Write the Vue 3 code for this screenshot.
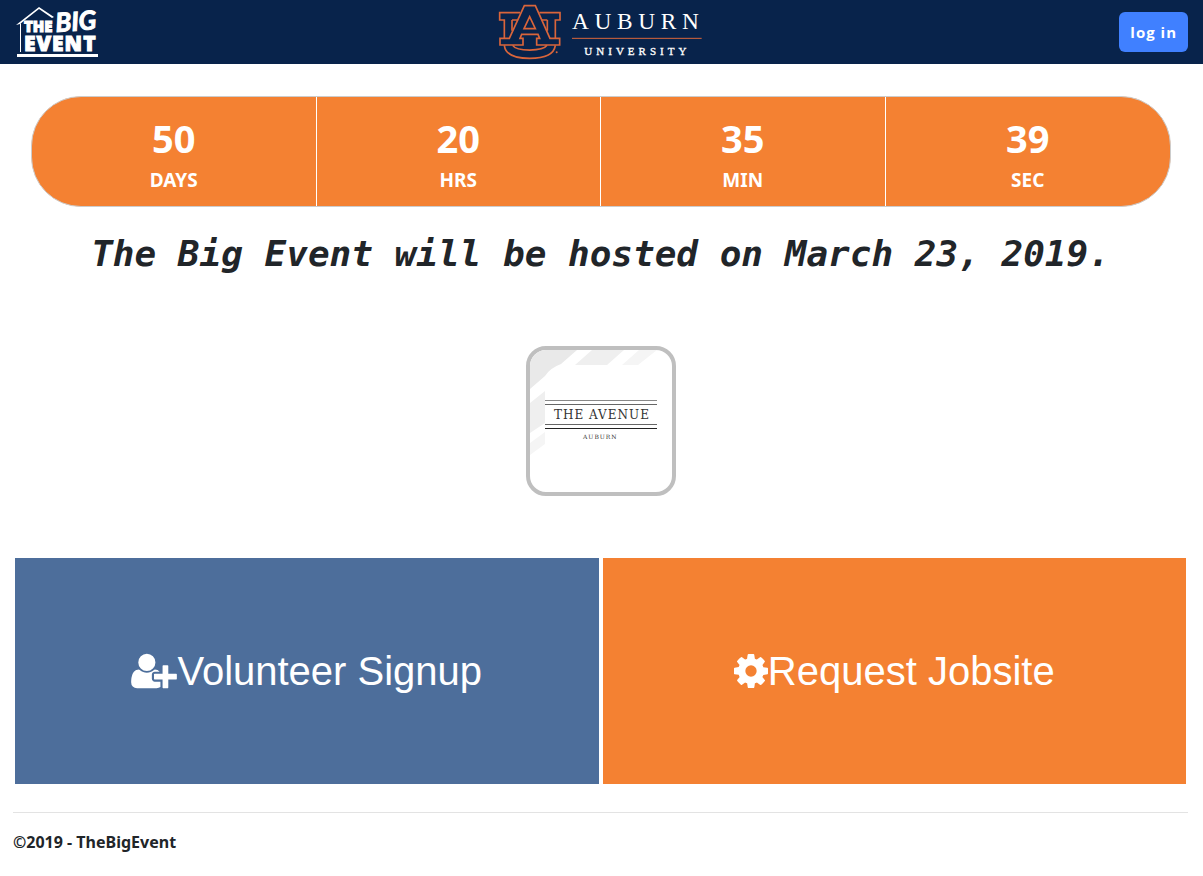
<script setup>
import { ref } from 'vue'

const countdown = ref([
  { value: 50, label: 'DAYS' },
  { value: 20, label: 'HRS' },
  { value: 35, label: 'MIN' },
  { value: 39, label: 'SEC' },
])
</script>

<template>
  <div class="page">
    <header class="navbar">
      <a class="brand" href="#" aria-label="The Big Event">
        <svg width="84" height="52" viewBox="0 0 84 52" aria-hidden="true">
          <path d="M1 19 L24 1 L39 11 L37 12 L24 3 L5 18 Z" fill="#fff" />
          <path d="M5 18 L6 17 V46 H5 Z" fill="#fff" />
          <rect x="2" y="48" width="81" height="3" fill="#fff" />
          <text class="logo-heavy" x="9" y="26" font-size="15">THE</text>
          <text class="logo-script" x="41" y="26" font-size="26" transform="rotate(-4 41 26)">BIG</text>
          <text class="logo-heavy" x="9" y="45" font-size="21" letter-spacing="1">EVENT</text>
        </svg>
      </a>
      <a class="university" href="#" aria-label="Auburn University">
        <svg width="204" height="58" viewBox="24 9 612 174" aria-hidden="true">
          <g fill="none" stroke="#d9653b" stroke-width="5" stroke-linejoin="miter">
            <path d="M90 38 H29 V60 H43 V115 M148 38 H210 V60 H196 V115" />
            <path d="M66 60 V92 M172 60 V92 M66 60 H82 M156 60 H172" />
            <path d="M43 136 C46 165 80 175 119 175 C158 175 192 165 196 136" />
            <path d="M68 136 C80 155 158 155 171 136" />
            <path d="M103 17 H136 L180 115 H209 V135 H140 V115 H149 L144 103 H95 L90 115 H99 V135 H30 V115 H58 Z" />
            <path d="M119 50 L102 86 H136 Z" />
          </g>
          <circle cx="200" cy="157" r="3" fill="#d9653b" />
          <path d="M246 115 H635" stroke="#d9653b" stroke-width="3" />
          <text class="logo-serif" x="246" y="87" font-size="70" letter-spacing="17">AUBURN</text>
          <text class="logo-serif small" x="283" y="166" font-size="33" letter-spacing="12">UNIVERSITY</text>
        </svg>
      </a>
      <button class="login" type="button">log in</button>
    </header>

    <main>
      <section class="countdown" aria-label="Time remaining">
        <div v-for="unit in countdown" :key="unit.label" class="unit">
          <span class="value">{{ unit.value }}</span>
          <span class="label">{{ unit.label }}</span>
        </div>
      </section>

      <h1 class="headline">The Big Event will be hosted on March 23, 2019.</h1>

      <a class="sponsor" href="#" aria-label="The Avenue Auburn">
        <svg viewBox="0 0 142 142" aria-hidden="true">
          <path d="M0 0 H47 L31 14 Q20 18 15 26 L0 39 Z" fill="#e9e9e9" />
          <path d="M62 0 H94 L77 15 H45 Z M0 53 L15 41 V73 L0 83 Z" fill="#efefef" />
          <path d="M109 0 H127 L108 15 H92 Z M0 93 L15 82 V94 L0 105 Z" fill="#f5f5f5" />
          <path d="M15 50.500 H127" stroke="#888" />
          <path d="M15 54.500 H127 M15 74.500 H127" stroke="#666" />
          <path d="M15 78.500 H127" stroke="#222" />
          <text class="avenue" x="24" y="69" font-size="12" letter-spacing="1">THE AVENUE</text>
          <text class="avenue" x="53" y="89" font-size="6" letter-spacing="1">AUBURN</text>
        </svg>
      </a>

      <nav class="actions" aria-label="Sign up">
        <button class="action volunteer" type="button">
          <svg width="46" height="40" viewBox="0 0 2048 1792" aria-hidden="true">
            <path fill="currentColor" d="M704 896q-159 0-271.500-112.500t-112.500-271.500 112.500-271.500 271.500-112.500 271.500 112.500 112.500 271.500-112.500 271.500-271.500 112.500zm960 128h352q13 0 22.500 9.500t9.500 22.500v192q0 13-9.500 22.500t-22.500 9.500h-352v352q0 13-9.500 22.500t-22.500 9.500h-192q-13 0-22.500-9.500t-9.500-22.500v-352h-352q-13 0-22.500-9.500t-9.500-22.500v-192q0-13 9.500-22.500t22.500-9.500h352v-352q0-13 9.500-22.500t22.500-9.500h192q13 0 22.500 9.500t9.500 22.500v352zm-736 224q0 52 38 90t90 38h256v238q-68 50-171 50h-874q-121 0-194-69t-73-190q0-53 3.500-103.500t14-109 26.500-108.500 43-97.500 62-81 85.500-53.500 111.500-20q19 0 39 17 79 61 154.500 91.500t164.500 30.500 164.500-30.500 154.500-91.500q20-17 39-17 132 0 217 96h-223q-52 0-90 38t-38 90v192z" />
          </svg>
          <span>Volunteer Signup</span>
        </button>
        <button class="action jobsite" type="button">
          <svg width="34" height="40" viewBox="128 0 1536 1792" aria-hidden="true">
            <path fill="currentColor" d="M1152 896q0-106-75-181t-181-75-181 75-75 181 75 181 181 75 181-75 75-181zm512-109v222q0 12-8 23t-20 13l-185 28q-19 54-39 91 35 50 107 138 10 12 10 25t-9 23q-27 37-99 108t-94 71q-12 0-26-9l-138-108q-44 23-91 38-16 136-29 186-7 28-36 28h-222q-14 0-24.500-8.500t-11.500-21.500l-28-184q-49-16-90-37l-141 107q-10 9-25 9-14 0-25-11-126-114-165-168-7-10-7-23 0-12 8-23 15-21 51-66.500t54-70.500q-27-50-41-99l-183-27q-13-2-21-12.500t-8-23.500v-222q0-12 8-23t19-13l186-28q14-46 39-92-40-57-107-138-10-12-10-24 0-10 9-23 26-36 98.500-107.500t94.500-71.500q13 0 26 10l138 107q44-23 91-38 16-136 29-186 7-28 36-28h222q14 0 24.500 8.500t11.500 21.500l28 184q49 16 90 37l142-107q9-9 24-9 13 0 25 10 129 119 165 170 7 8 7 22 0 12-8 23-15 21-51 66.500t-54 70.500q26 50 41 98l183 28q13 2 21 12.500t8 23.500z" />
          </svg>
          <span>Request Jobsite</span>
        </button>
      </nav>
    </main>

    <footer class="footer">©2019 - TheBigEvent</footer>
  </div>
</template>

<style>
body {
  background: #fff;
}
</style>

<style scoped>
.page {
  color: #212529;
  font-family: "Noto Sans", "Open Sans", sans-serif;
}

.navbar {
  display: grid;
  grid-template-columns: 1fr auto 1fr;
  align-items: center;
  height: 64px;
  padding: 0 15px;
  background: #08234b;
}

.brand,
.university {
  display: block;
  line-height: 0;
}

.brand svg,
.university svg {
  overflow: visible;
}

.university {
  padding-right: 4px;
}

.login {
  justify-self: end;
  height: 40px;
  padding: 0 11px;
  border: 0;
  border-radius: 6px;
  background: #4080ff;
  color: #fff;
  font: 700 15px "Open Sans", sans-serif;
  letter-spacing: 1px;
}

.logo-heavy {
  fill: #fff;
  stroke: #fff;
  font-family: "Open Sans", sans-serif;
  font-weight: 800;
}

.logo-script {
  fill: #fff;
  stroke: #fff;
  font-family: Lato, sans-serif;
  font-style: italic;
  font-weight: 700;
}

.logo-serif {
  fill: #fff;
  font-family: "Liberation Serif", serif;
}

.logo-serif.small {
  stroke: #fff;
}

main {
  padding: 32px 17px 0 15px;
}

.countdown {
  display: grid;
  grid-template-columns: repeat(4, 1fr);
  margin: 0 15px 0 16px;
  overflow: hidden;
  border: 1px solid #ccc;
  border-radius: 50px;
  background: #f48132;
  color: #fff;
  font-weight: 700;
  text-align: center;
}

.unit {
  display: flex;
  flex-direction: column;
  padding: 16px 0 9px;
  border-right: 1px solid #fff;
}

.unit:last-child {
  border-right: 0;
}

.value {
  font-size: 38px;
  line-height: 50px;
}

.label {
  font-size: 19px;
  line-height: 34px;
}

.headline {
  margin: 23px 0 0;
  font: italic 700 36px/48px "DejaVu Sans Mono", monospace;
  text-align: center;
}

.sponsor {
  display: block;
  box-sizing: border-box;
  width: 150px;
  margin: 68px auto 0;
  overflow: hidden;
  border: 4px solid #bfbfbf;
  border-radius: 20px;
  line-height: 0;
}

.avenue {
  fill: #333;
  font-family: "DejaVu Serif", serif;
}

.actions {
  display: grid;
  grid-template-columns: 1fr 1fr;
  gap: 4px;
  margin-top: 62px;
}

.action {
  display: flex;
  align-items: center;
  justify-content: center;
  padding: 90px 0;
  border: 0;
  color: #fff;
  font: 40px/46px "Liberation Sans", Arial, sans-serif;
}

.volunteer {
  background: #4d6e9b;
}

.jobsite {
  background: #f48132;
}

.footer {
  margin: 28px 15px 0 13px;
  padding: 18px 0 24px;
  border-top: 1px solid #e3e3e3;
  font-size: 16px;
  font-weight: 700;
  line-height: 22px;
}
</style>
